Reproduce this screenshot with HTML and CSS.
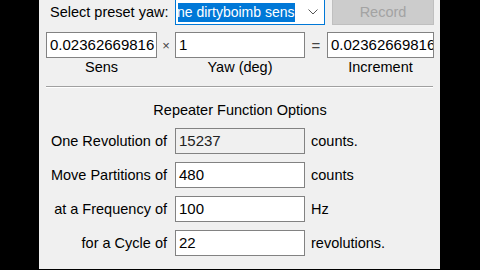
FILE: index.html
```html
<!DOCTYPE html>
<html lang="en">
<head>
  <meta charset="UTF-8" />
  <meta name="viewport" content="width=device-width, initial-scale=1.0" />
  <title>Sensitivity Calculator</title>
  <link rel="stylesheet" href="styles.css">
</head>
<body>
  <div class="panel">
    <div class="preset-row">
      <span class="preset-label">Select preset yaw:</span>
      <div class="combo">
        <span class="combo-text"><span class="sel">ne dirtyboimb sens</span></span>
        <svg class="chevron" width="10" height="6" viewBox="0 0 10 6">
          <polyline points="0.5,0.5 5,5 9.5,0.5" fill="none" stroke="#555" stroke-width="1" />
        </svg>
      </div>
      <button class="record" disabled>Record</button>
    </div>

    <div class="calc-row">
      <div class="box box-sens">0.02362669816</div>
      <span class="op op-times">×</span>
      <div class="box box-yaw">1</div>
      <span class="op op-eq">=</span>
      <div class="box box-inc">0.02362669816</div>
    </div>
    <div class="calc-labels">
      <span class="box-sens">Sens</span>
      <span class="op-times"></span>
      <span class="box-yaw">Yaw (deg)</span>
      <span class="op-eq"></span>
      <span class="box-inc">Increment</span>
    </div>

    <div class="separator"></div>

    <div class="section-title">Repeater Function Options</div>

    <div class="options">
      <span class="opt-label">One Revolution of</span>
      <div class="box readonly">15237</div>
      <span class="unit">counts.</span>

      <span class="opt-label">Move Partitions of</span>
      <div class="box">480</div>
      <span class="unit">counts</span>

      <span class="opt-label">at a Frequency of</span>
      <div class="box">100</div>
      <span class="unit">Hz</span>

      <span class="opt-label">for a Cycle of</span>
      <div class="box">22</div>
      <span class="unit">revolutions.</span>
    </div>
  </div>
</body>
</html>
```

FILE: styles.css
```css
body {
  margin: 0;
  background: #000;
  font-family: "Liberation Sans", Arial, sans-serif;
  font-size: 14.5px;
  color: #000;
  overflow: hidden;
}
.panel {
  margin-left: 39px;
  width: 401px;
  height: 270px;
  background: #f0f0f0;
  padding: 0 6px 0 7px;
  box-sizing: border-box;
}
.preset-row {
  display: flex;
  align-items: center;
  height: 26px;
  margin-top: -1px;
}
.preset-label {
  width: 129px;
  padding-left: 4px;
  box-sizing: border-box;
}
.combo {
  width: 150px;
  height: 26px;
  box-sizing: border-box;
  border: 1px solid #0078d7;
  background: #fff;
  display: flex;
  align-items: center;
  padding: 0 6px 0 2px;
}
.combo-text {
  flex: 1;
  overflow: hidden;
  white-space: nowrap;
  font-size: 14px;
}
.sel {
  display: inline-block;
  background: #0078d7;
  color: #fff;
  line-height: 19px;
  margin-left: -1px;
}
.chevron {
  margin-left: 4px;
}
.record {
  margin-left: 7px;
  width: 102px;
  height: 26px;
  background: #cccccc;
  border: 1px solid #bfbfbf;
  color: #a3a3a3;
  font-family: inherit;
  font-size: 14.5px;
  padding: 0;
}
.calc-row {
  display: flex;
  align-items: center;
  margin-top: 7px;
}
.box {
  height: 26px;
  box-sizing: border-box;
  border: 1px solid #828282;
  background: #fff;
  font-size: 15px;
  line-height: 24px;
  padding: 0 3px;
  white-space: nowrap;
  overflow: hidden;
}
.box.readonly {
  background: #f0f0f0;
  color: #222;
}
.box-sens { width: 111px; }
.box-yaw { width: 130px; }
.box-inc { width: 107px; }
.op {
  text-align: center;
  color: #444;
  font-size: 13px;
}
.op-times { width: 18px; }
.op-eq { width: 22px; font-size: 15px; }
.calc-labels {
  display: flex;
  margin-top: 1px;
  line-height: 17px;
}
.calc-labels span {
  text-align: center;
}
.separator {
  margin-top: 10px;
  border-top: 1px solid #a0a0a0;
  border-bottom: 1px solid #fff;
  width: 387px;
}
.section-title {
  text-align: center;
  margin-top: 14px;
  line-height: 17px;
}
.options {
  display: grid;
  grid-template-columns: 129px 130px auto;
  grid-auto-rows: 26px;
  row-gap: 8px;
  margin-top: 9px;
  align-items: center;
}
.opt-label {
  text-align: right;
  padding-right: 8px;
  white-space: nowrap;
}
.unit {
  padding-left: 6px;
}
```
